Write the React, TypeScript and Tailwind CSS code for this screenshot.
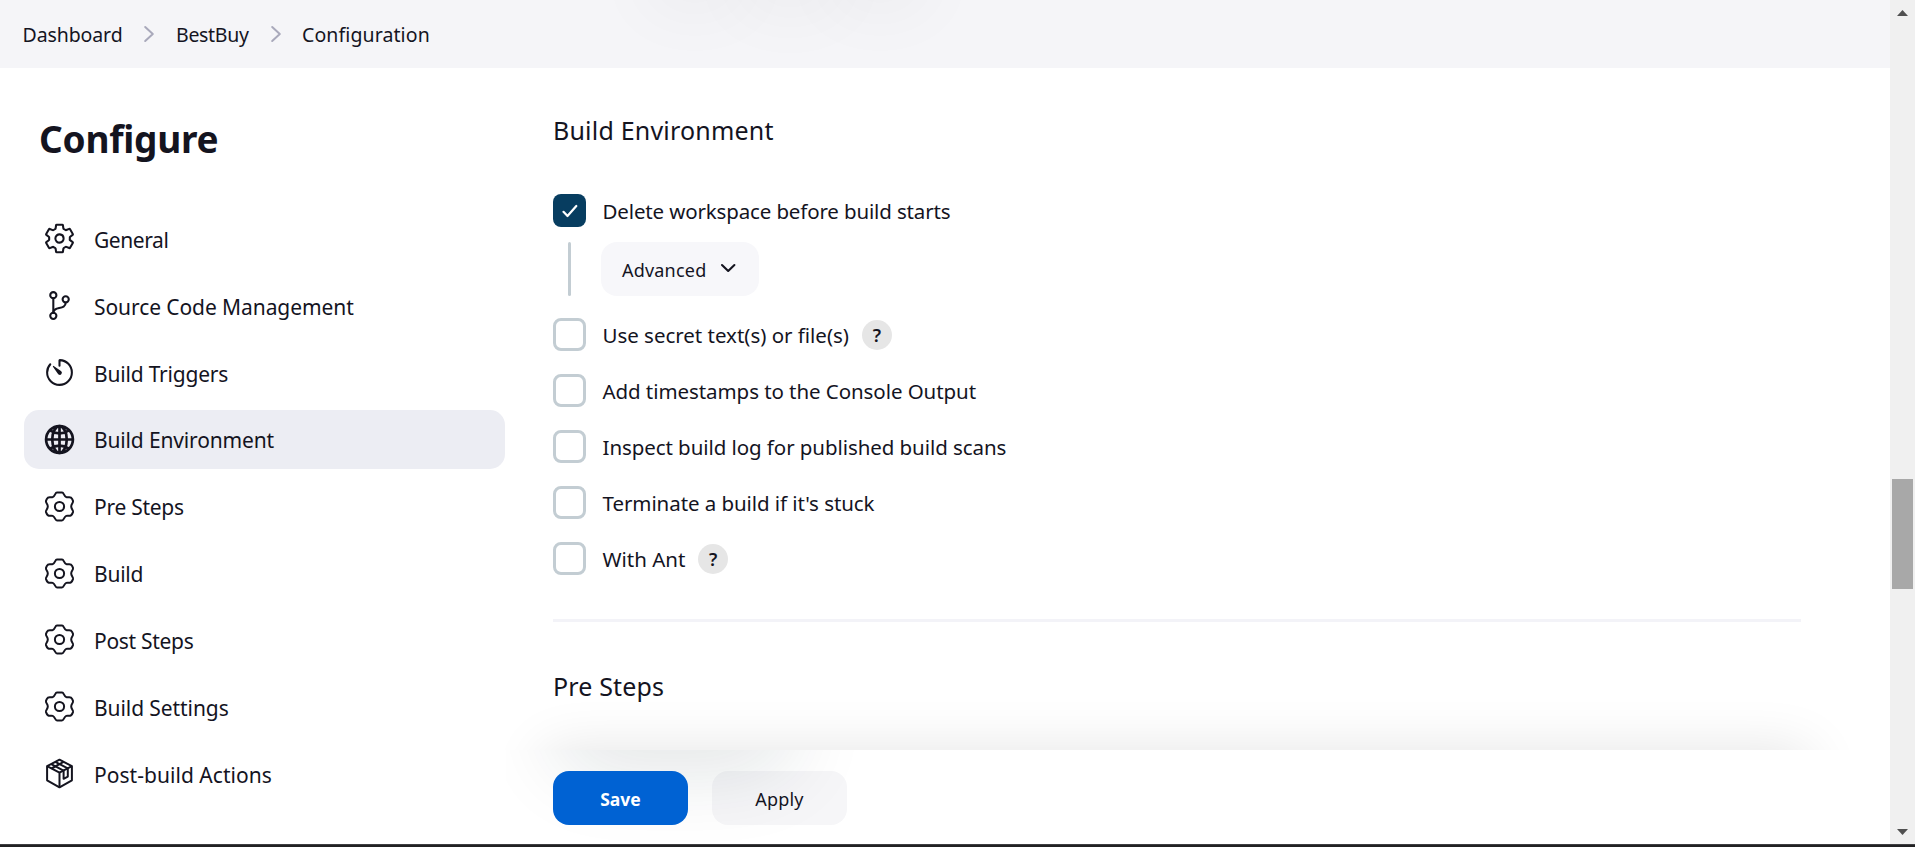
import type { ReactNode } from 'react';
import { IoSettingsOutline, IoGitBranchOutline, IoTimerOutline, IoGlobeOutline } from 'react-icons/io5';

function StepsIcon() {
  return (
    <svg viewBox="0 0 33 33" className="size-[33px]" fill="none" stroke="currentColor" strokeWidth="2" strokeLinejoin="round">
      <circle cx="16.5" cy="16.5" r="4.6" />
      <path d="M14 2.500h5c2 0 1.700 3.600 4.300 4.600 1.800.6 3.200-.5 4.600.5 1 .9 1.700 2 2.100 3.300.5 2-1.800 3-1.800 5.600s2.300 3.600 1.800 5.600c-.4 1.300-1.100 2.400-2.100 3.300-1.400 1-2.800-.1-4.600.5-2.600 1-2.300 4.600-4.300 4.600h-5c-2 0-1.700-3.600-4.300-4.600-1.800-.6-3.200.5-4.600-.5-1-.9-1.700-2-2.100-3.300-.5-2 1.800-3 1.800-5.600s-2.300-3.600-1.800-5.600c.4-1.300 1.100-2.400 2.100-3.300 1.400-1 2.800.1 4.600-.5 2.600-1 2.300-4.600 4.300-4.600z" />
    </svg>
  );
}

function PackageIcon() {
  return (
    <svg viewBox="0 0 33 33" className="size-[33px]" fill="none" stroke="currentColor" strokeWidth="2" strokeLinejoin="round">
      <path d="M16.500 2.700 28.900 9.200v14.100L16.500 30.300 4.100 23.300V9.200z" />
      <path d="M4.100 9.200 16.500 15.700 28.900 9.200M16.500 15.700v14.600" />
      <path d="M8.200 7.100 20.600 13.600v8.200l4.200-2.200v-8.200L12.300 4.900" />
      <path d="M8.500 11.500 20.600 4.900" />
    </svg>
  );
}

type NavItem = { label: string; icon: ReactNode; tracking: string; active?: boolean };

const ionClass = 'size-[33px]';

const nav: NavItem[] = [
  { label: 'General', icon: <IoSettingsOutline className={ionClass} />, tracking: 'tracking-[-0.43px]' },
  { label: 'Source Code Management', icon: <IoGitBranchOutline className={ionClass} />, tracking: 'tracking-[-0.08px]' },
  { label: 'Build Triggers', icon: <IoTimerOutline className={ionClass} />, tracking: 'tracking-[-0.2px]' },
  {
    label: 'Build Environment',
    icon: <IoGlobeOutline className="size-[33px] stroke-[14] [&_*]:stroke-[42px]" />,
    tracking: 'tracking-[-0.15px]',
    active: true,
  },
  { label: 'Pre Steps', icon: <StepsIcon />, tracking: 'tracking-[-0.28px]' },
  { label: 'Build', icon: <StepsIcon />, tracking: 'tracking-[-0.25px]' },
  { label: 'Post Steps', icon: <StepsIcon />, tracking: 'tracking-[-0.3px]' },
  { label: 'Build Settings', icon: <StepsIcon />, tracking: 'tracking-[-0.08px]' },
  { label: 'Post-build Actions', icon: <PackageIcon />, tracking: 'tracking-[0.04px]' },
];

const options = [
  { label: 'Use secret text(s) or file(s)', help: true },
  { label: 'Add timestamps to the Console Output' },
  { label: 'Inspect build log for published build scans' },
  { label: "Terminate a build if it's stuck" },
  { label: 'With Ant', help: true },
];

function Sep() {
  return (
    <svg viewBox="0 0 12 18" className="h-[18px] w-3 shrink-0" fill="none" stroke="#a9a9bb" strokeWidth="2" strokeLinecap="round" strokeLinejoin="round">
      <path d="M2.200 2 9.800 9l-7.600 7" />
    </svg>
  );
}

function Option({ label, help, checked }: { label: string; help?: boolean; checked?: boolean }) {
  return (
    <div className="flex h-[33px] items-center">
      {checked ? (
        <span className="flex size-[33px] shrink-0 items-center justify-center rounded-lg bg-[#073d60]">
          <svg viewBox="0 0 16 14" className="h-[14px] w-4" fill="none" stroke="white" strokeWidth="2.2" strokeLinecap="round" strokeLinejoin="round">
            <path d="M1.500 7.800 5.500 12 14.300 2" />
          </svg>
        </span>
      ) : (
        <span className="size-[33px] shrink-0 rounded-lg border-[3px] border-[#c3cdd3] bg-white" />
      )}
      <span
        className={`whitespace-nowrap pl-[16.500px] pt-px text-[20.5px] leading-[30px] ${
          checked ? 'tracking-[-0.14px]' : help ? 'tracking-[-0.02px]' : 'tracking-[-0.07px]'
        }`}
      >
        {label}
      </span>
      {help && (
        <span className="ml-[13px] flex size-[30px] items-center justify-center rounded-full bg-[#e6e6e6] text-[18px] font-semibold leading-none">?</span>
      )}
    </div>
  );
}

export default function App() {
  return (
    <div className="relative flex h-[847px] w-[1915px] flex-col overflow-hidden bg-white font-['Noto_Sans',sans-serif] text-[#14141f]">
      <div className="flex h-[844px] shrink-0">
        <div className="flex w-[1890px] shrink-0 flex-col">
          <header className="relative flex h-[68px] shrink-0 items-center overflow-hidden bg-[#f5f5f8] pl-[22.500px] text-[19.5px]">
            <span className="w-[120.5px] pt-0.5 tracking-[-0.1px]">Dashboard</span>
            <Sep />
            <span className="ml-[21px] w-[94px] pt-0.5 tracking-[-0.3px]">BestBuy</span>
            <Sep />
            <span className="ml-5 pt-0.5 tracking-[0.1px]">Configuration</span>
            <span className="absolute -top-10 left-[655px] h-9 w-20 rounded-full shadow-[0_0_70px_10px_rgba(0,0,0,0.05)]" />
            <span className="absolute -top-10 left-[750px] h-9 w-20 rounded-full shadow-[0_0_70px_12px_rgba(0,0,0,0.05)]" />
            <span className="absolute -top-10 left-[840px] h-9 w-20 rounded-full shadow-[0_0_70px_10px_rgba(0,0,0,0.05)]" />
          </header>

          <div className="flex min-h-0 flex-1">
            <aside className="w-[553px] shrink-0 pl-6">
              <h1 className="mt-[48px] pl-[15px] text-[37px] font-bold leading-[46px] tracking-[-0.25px]">Configure</h1>
              <nav className="mt-[47.500px] flex w-[481px] flex-col gap-2">
                {nav.map((n) => (
                  <div
                    key={n.label}
                    className={`flex h-[58.85px] items-center rounded-[15px] pl-[19px] ${n.active ? 'bg-[#ecedf3]' : ''}`}
                  >
                    {n.icon}
                    <span className={`whitespace-nowrap pl-[18px] pt-[2px] text-[21px] leading-[30px] ${n.tracking}`}>{n.label}</span>
                  </div>
                ))}
              </nav>
            </aside>

            <main className="flex w-[1248px] shrink-0 flex-col">
              <h2 className="mt-[47px] text-[25px] leading-[30px] tracking-[0.2px]">Build Environment</h2>
              <div className="mt-[49px]">
                <Option label="Delete workspace before build starts" checked />
              </div>
              <div className="mt-[15px] flex h-[54px]">
                <span className="ml-[15px] w-[3px] rounded-full bg-[#c3cdd3]" />
                <button className="ml-[30px] flex w-[158px] items-center rounded-2xl bg-[#f7f7fa] pl-[21px] text-[18px] leading-6 tracking-[0.2px]">
                  <span className="w-[98px] pt-0.5 text-left">Advanced</span>
                  <svg viewBox="0 0 16 10" className="-mt-[2px] h-2.5 w-4" fill="none" stroke="currentColor" strokeWidth="2.100" strokeLinecap="round" strokeLinejoin="round">
                    <path d="M2 2l6.200 6 6.200-6" />
                  </svg>
                </button>
              </div>
              <div className="mt-[22px] flex flex-col gap-[23px]">
                {options.map((o) => (
                  <Option key={o.label} label={o.label} help={o.help} />
                ))}
              </div>
              <div className="mt-11 h-[3px] shrink-0 bg-[#f3f3f8]" />
              <h2 className="mt-[49px] shrink-0 text-[25px] leading-[30px] tracking-[0.15px]">Pre Steps</h2>
            </main>
          </div>
        </div>

        <div className="flex w-[25px] flex-col items-center bg-[#f0f0f0]">
          <svg viewBox="0 0 11 6" className="mt-2.5 h-1.5 w-[11px]" fill="#505050"><path d="M5.500 0 11 6H0z" /></svg>
          <div className="mt-[463px] h-[110px] w-[21px] bg-[#a8a8a8]" />
          <svg viewBox="0 0 11 6" className="mt-60 h-1.5 w-[11px]" fill="#505050"><path d="M0 0h11L5.500 6z" /></svg>
        </div>
      </div>
      <div className="h-[3px] shrink-0 border-t border-[#3f3f42] bg-[#212123]" />

      <div className="pointer-events-none absolute left-[490px] top-[690px] h-[60px] w-[1390px] overflow-hidden">
        <div className="ml-[55px] mt-[60px] h-[94px] w-[1264px] shadow-[0_0_56px_rgba(0,0,0,0.11)]" />
      </div>
      <div className="absolute left-[506px] top-[750px] h-[94px] w-[1384px] overflow-hidden bg-white">
        <div className="absolute -top-10 left-[74px] h-9 w-[190px] rounded-full shadow-[0_0_80px_26px_rgba(20,40,50,0.12)]" />
        <div className="relative flex gap-6 pl-[47px] pt-[21px] text-[18px]">
          <button className="h-[54px] w-[135px] rounded-2xl bg-[#0062d3] pt-0.5 text-[17.500px] font-bold text-white">Save</button>
          <button className="h-[54px] w-[135px] rounded-2xl bg-[#14144b]/[0.04] pt-0.5 tracking-[0.2px]">Apply</button>
        </div>
      </div>
    </div>
  );
}
